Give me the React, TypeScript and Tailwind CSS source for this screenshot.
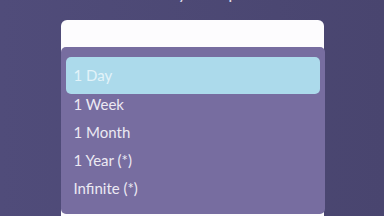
import React from "react";

const items = ["1 Day", "1 Week", "1 Month", "1 Year (*)", "Infinite (*)"];

export default function App() {
  return (
    <div
      className="w-[384px] h-[216px] overflow-hidden bg-gradient-to-r from-[#504c7a] to-[#49456f] flex flex-col items-center"
      style={{ fontFamily: "Lato, 'Noto Sans', sans-serif" }}
    >
      <div className="h-[20px] shrink-0 w-full flex justify-center overflow-hidden">
        <div className="mt-[-19px] h-[22px] text-[18px] leading-[22px] text-[#dcdaea] pl-[18px]">
          Entry Lifespan
        </div>
      </div>
      <div className="relative w-[263px] h-[210px] shrink-0 bg-[#fdfcfe] rounded-[6px]">
        <div className="absolute left-0 right-[-1px] top-[27px] h-[167px] bg-[#776da0] rounded-[5px] pt-[10px] flex flex-col">
          {items.map((it, i) =>
            i === 0 ? (
              <div
                key={it}
                className="ml-[5px] mr-[5px] h-[37px] -mb-[4px] shrink-0 flex items-center pl-[8px] bg-[#acdaeb] rounded-[5px] text-[15px] text-[#e3f3f9]"
              >
                {it}
              </div>
            ) : (
              <div
                key={it}
                className="h-[28px] shrink-0 flex items-center pl-[13px] text-[15px] text-[#ece9f3]"
              >
                {it}
              </div>
            )
          )}
        </div>
      </div>
    </div>
  );
}
